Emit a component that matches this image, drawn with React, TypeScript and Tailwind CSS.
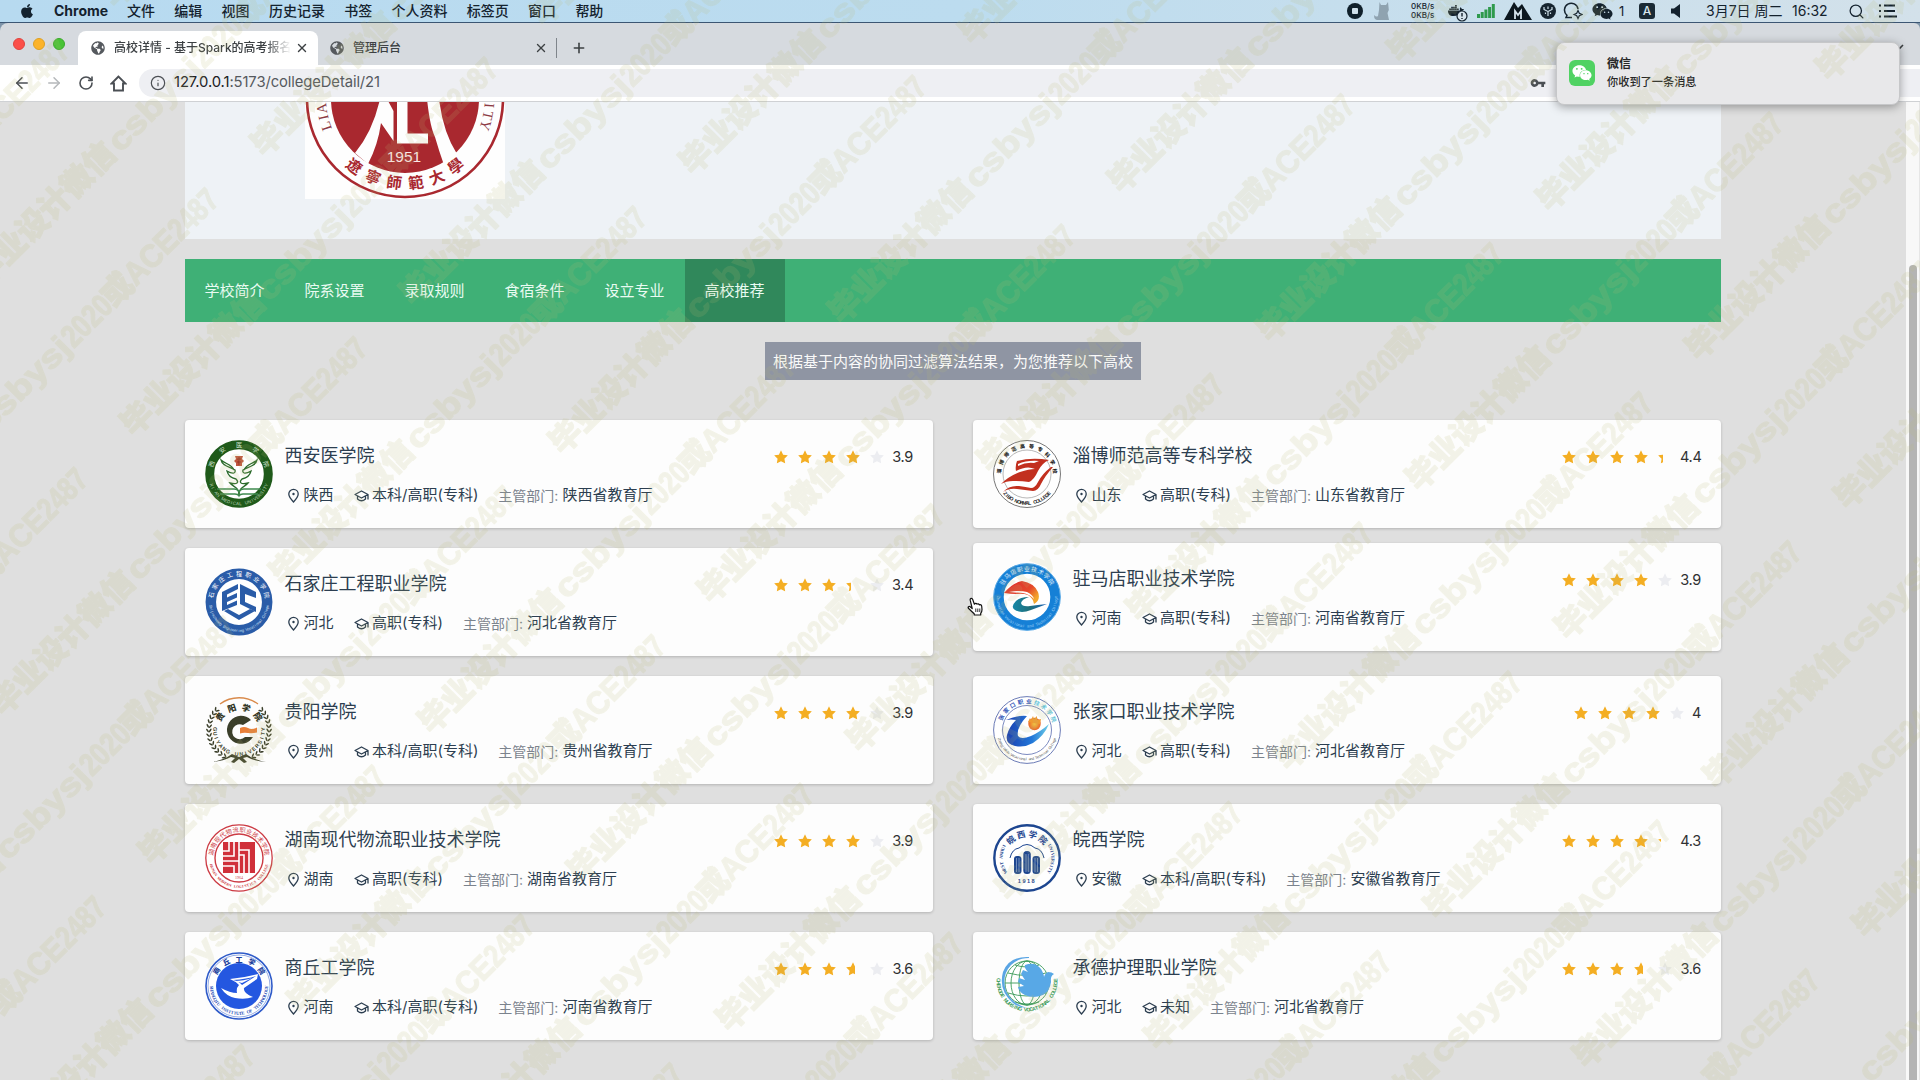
import React from "react";
import { FaApple, FaDocker, FaWeixin, FaGlobeAmericas } from "react-icons/fa";
import { MdVpnKey } from "react-icons/md";
import { ArrowLeft, ArrowRight, Plus, X, Search, Info, RotateCw } from "lucide-react";

/* ---------- shared drawing helpers ---------- */

type ArcProps = {
  text: string;
  r: number;
  from: number;
  to: number;
  size: number;
  fill: string;
  cx?: number;
  cy?: number;
  inward?: boolean;
  weight?: number;
  serif?: boolean;
};

/* Characters spread on a circle; angles in degrees clockwise from 12 o'clock. */
function ArcText({ text, r, from, to, size, fill, cx = 34, cy = 34, inward, weight = 700, serif }: ArcProps) {
  const chars = Array.from(text);
  const step = chars.length > 1 ? (to - from) / (chars.length - 1) : 0;
  return (
    <g
      fill={fill}
      fontSize={size}
      fontWeight={weight}
      textAnchor="middle"
      fontFamily={serif ? "'Liberation Serif','Noto Sans CJK SC',serif" : "'Liberation Sans','Noto Sans CJK SC',sans-serif"}
    >
      {chars.map((c, i) => {
        const a = from + step * i;
        const rad = (a * Math.PI) / 180;
        const x = cx + r * Math.sin(rad);
        const y = cy - r * Math.cos(rad);
        return (
          <text key={i} transform={`translate(${x} ${y}) rotate(${inward ? a - 180 : a})`} y={size * 0.36}>
            {c}
          </text>
        );
      })}
    </g>
  );
}

const seal = "block h-[68px] w-[68px] shrink-0";

function LogoXian() {
  return (
    <svg className={seal} viewBox="0 0 68 68">
      <circle cx="34" cy="34" r="29.3" fill="#fff" stroke="#1f5a1a" strokeWidth="9" />
      <ArcText text="西安医学院" r={29} from={-70} to={70} size={6.2} fill="#cfe2cc" weight={400} />
      <ArcText text="XI'AN MEDICAL UNIVERSITY" r={29.5} from={-112} to={-248} size={4.5} fill="#b9d3b6" inward weight={400} />
      <path d="M30 16h8l-1 3 2 2-2 2v3h-6v-3l-2-2 2-2z" fill="#c0563e" />
      <path d="M34 17v8M32 19h4M32 22h4" stroke="#8f2f20" strokeWidth=".8" />
      <g fill="none" stroke="#2b6a2b" strokeWidth="1.3">
        <path d="M34 55c0-8-6-8-9-12 8 2 9-1 6-4-5-1-8-4-9-8 5 3 9 3 8-1-5-3-13-4-14-10 4 4 11 4 13 10" />
        <path d="M34 55c0-8 6-8 9-12-8 2-9-1-6-4 5-1 8-4 9-8-5 3-9 3-8-1 5-3 13-4 14-10-4 4-11 4-13 10" />
      </g>
      <path d="M12 49h17q4 0 5 3 1-3 5-3h17M15 54h15q3 0 4 2 1-2 4-2h15" fill="none" stroke="#3f8a4f" strokeWidth="1.3" />
    </svg>
  );
}

function LogoShijiazhuang() {
  return (
    <svg className={seal} viewBox="0 0 68 68">
      <circle cx="34" cy="34" r="28.2" fill="#fff" stroke="#2a5ca8" strokeWidth="10.5" />
      <ArcText text="石家庄工程职业学院" r={28.5} from={-76} to={76} size={6} fill="#fff" weight={400} />
      <ArcText text="Shijiazhuang Engineering Vocational College" r={28.5} from={-98} to={-262} size={3.8} fill="#d6e2f5" inward weight={400} />
      <g fill="#2a5ca8">
        <path d="M17 24l16-8v5l-11 5.500v3l10-4.500v4.500l-10 4.500v3l10-4.500v4.500l-15 6z" />
        <path d="M35 16l16 8v6l-11-4v8l11 5v5l-16-8z" />
        <path d="M19 43l4-2 11 6 11-6 5 2-16 9z" />
      </g>
    </svg>
  );
}

function LogoGuiyang() {
  const leaves = Array.from({ length: 13 }, (_, i) => 48 + i * 8.6);
  return (
    <svg className={seal} viewBox="0 0 68 68">
      <path d="M15 8A32 32 0 0 1 53 8" fill="none" stroke="#d98b4c" strokeWidth="1.4" />
      {leaves.map((a) => (
        <g key={a} fill="#3b3f2a">
          <ellipse cx="34" cy="2.500" rx="2.200" ry=".8" transform={`rotate(${a} 34 34) rotate(35 34 2.500)`} />
          <ellipse cx="34" cy="5.200" rx="2.200" ry=".8" transform={`rotate(${a} 34 34) rotate(-35 34 5.200)`} />
          <ellipse cx="34" cy="2.500" rx="2.200" ry=".8" transform={`rotate(${-a} 34 34) rotate(-35 34 2.500)`} />
          <ellipse cx="34" cy="5.200" rx="2.200" ry=".8" transform={`rotate(${-a} 34 34) rotate(35 34 5.200)`} />
        </g>
      ))}
      <path d="M7 66q12-2 20-8l7 3 7-3q8 6 20 8-12-1-19-5l-4 1 4 4-3 1-5-4-5 4-3-1 4-4-4-1q-7 4-19 5z" fill="#3b3f2a" />
      <ArcText text="贵阳学院" r={23} from={-55} to={55} size={8.5} fill="#2f3322" weight={900} />
      <ArcText text="GUIYANG UNIVERSITY" r={24} from={-88} to={-272} size={5.4} fill="#3b3f2a" inward />
      <path d="M46 24a14 14 0 1 0 2 17h-8a7.500 7.500 0 1 1-2-12z" fill="#3b3f2a" />
      <path d="M35 32q4-2 8 0t9-.5v5q-4 1-9 .5t-8 .5z" fill="#e9803a" />
    </svg>
  );
}

function LogoHunan() {
  return (
    <svg className={seal} viewBox="0 0 68 68">
      <circle cx="34" cy="34" r="33.200" fill="#fff" stroke="#cc3b44" strokeWidth="1.300" />
      <circle cx="34" cy="34" r="24" fill="none" stroke="#cc3b44" strokeWidth="1.400" />
      <ArcText text="湖南现代物流职业技术学院" r={28.200} from={-78} to={78} size={6.200} fill="#cc3b44" weight={400} />
      <ArcText text="HUNAN MODERN LOGISTICS COLLEGE" r={28.500} from={-105} to={-255} size={3.800} fill="#cc3b44" inward serif />
      <path d="M18 18h32v31H18z" fill="#d0303a" />
      <path d="M24 18v9h-6M18 32h11V18M34 18v8h10v23M34 31h5v18M34 18v19H18M34 37v12M29 49v-7H18" fill="none" stroke="#fff" strokeWidth="1.600" />
      <text x="34" y="55" fontSize="4" fontFamily="'Liberation Serif',serif" fill="#cc3b44" textAnchor="middle">1964</text>
    </svg>
  );
}

function LogoShangqiu() {
  return (
    <svg className={seal} viewBox="0 0 68 68">
      <circle cx="34" cy="34" r="33" fill="#fff" stroke="#2f5bc9" strokeWidth="1.600" />
      <circle cx="34" cy="34" r="31" fill="none" stroke="#2f5bc9" strokeWidth=".5" />
      <circle cx="34" cy="34" r="23" fill="#2457e0" />
      <ArcText text="商丘工学院" r={27} from={-56} to={56} size={7} fill="#1d3f9d" weight={900} />
      <ArcText text="SHANGQIU INSTITUTE OF TECHNOLOGY" r={27.300} from={-92} to={-268} size={4.600} fill="#2a50b8" inward serif />
      <path d="M25 27q14-1 28-5l-1 5-13 9q-1 5 9 9-8 3-18 1-9-2-14-10 9 5 16 5-1-5 2-8-4-4-9-6z" fill="#fff" />
      <path d="M28 28q14-1 23-4l-14 9q-3-4-9-5z" fill="#2457e0" />
      <path d="M29 29q10 0 18-3l-10 5z" fill="#fff" />
    </svg>
  );
}

function LogoZibo() {
  return (
    <svg className={seal} viewBox="0 0 68 68">
      <circle cx="34" cy="34" r="33.500" fill="#fff" stroke="#555" strokeWidth=".8" />
      <circle cx="34" cy="34" r="24" fill="none" stroke="#888" strokeWidth=".6" />
      <ArcText text="淄博师范高等专科学校" r={28} from={-84} to={84} size={5} fill="#222" weight={900} />
      <ArcText text="ZIBO NORMAL COLLEGE" r={29} from={-132} to={-228} size={5} fill="#222" inward />
      <path d="M24 21q15-4 32-1-7 3-11 11-4 9-9 11-8-1-16-1-7 0-12 3 8-8 19-12 9-3 15-3-8-4-19 2-1-5 1-10z" fill="#c2301f" />
      <path d="M25 24q9-4 21-3l-5 2q-8-1-16 3z" fill="#fff" />
      <path d="M60 27q-8 9-12 17-3 7-8 7-8-1-16-2-8-1-14 3 6-7 16-6 7 1 12 2 4 0 7-6 4-8 13-15z" fill="#c2301f" />
    </svg>
  );
}

function LogoZhumadian() {
  return (
    <svg className={seal} viewBox="0 0 68 68">
      <defs>
        <linearGradient id="zmRed" x1="0" y1="0" x2="1" y2=".6">
          <stop offset="0" stopColor="#dc2c2c" />
          <stop offset=".7" stopColor="#e5482b" />
          <stop offset="1" stopColor="#f3a62c" />
        </linearGradient>
        <linearGradient id="zmBlue" x1="0" y1="0" x2="1" y2="0">
          <stop offset="0" stopColor="#1688a8" />
          <stop offset=".5" stopColor="#1f6f7a" />
          <stop offset="1" stopColor="#1b62b8" />
        </linearGradient>
      </defs>
      <circle cx="34" cy="34" r="28.300" fill="#fff" stroke="#1680d6" strokeWidth="10" />
      <circle cx="34" cy="34" r="33.400" fill="none" stroke="#5aa9e6" strokeWidth="1" />
      <ArcText text="驻马店职业技术学院" r={28.500} from={-58} to={58} size={5.800} fill="#e8f4fd" weight={400} />
      <ArcText text="Zhumadian Vocational and Technical College" r={29} from={-90} to={-270} size={4} fill="#9fd0f7" inward weight={400} />
      <path d="M11 30q8-10 18-12 12 2 16 11 3 8-4 12-1-6-6-9-5-2-12-1-6 0-12-1z" fill="url(#zmRed)" />
      <path d="M16 29q10-2 18 0 6 3 7 7-5-5-11-6z" fill="#fff" />
      <path d="M36 34q-9 0-13 4-6 6-1 9 6 4 16 0 8-3 16-6-10 1-17 2-8 1-9-3 1-4 8-6z" fill="url(#zmBlue)" />
    </svg>
  );
}

function LogoZhangjiakou() {
  return (
    <svg className={seal} viewBox="0 0 68 68">
      <defs>
        <linearGradient id="zjBlue" x1="0" y1="0" x2="1" y2="0">
          <stop offset="0" stopColor="#1b3fb0" />
          <stop offset=".6" stopColor="#2277d8" />
          <stop offset="1" stopColor="#6fd0e8" />
        </linearGradient>
        <radialGradient id="zjSun">
          <stop offset="0" stopColor="#f8c63c" />
          <stop offset="1" stopColor="#e8642a" />
        </radialGradient>
      </defs>
      <circle cx="34" cy="34" r="33.400" fill="#fff" stroke="#5a6cae" strokeWidth=".9" />
      <circle cx="34" cy="34" r="24.500" fill="none" stroke="#5a6cae" strokeWidth=".8" />
      <ArcText text="张家口职业" r={28.500} from={-64} to={4} size={5.600} fill="#2f55b8" />
      <ArcText text="技术学院" r={28.500} from={20} to={68} size={5.600} fill="#62c3d8" />
      <ArcText text="Zhangjiakou Vocational and Technical College" r={29} from={-108} to={-252} size={3.700} fill="#555" inward weight={400} />
      <path d="M13 24q11-5 21-4-11 12-9 20 3 4 13 0 9-4 18-12-5 12-16 19-9 5-18 3-10-2-8-11 2-8 9-15-5-1-10 0z" fill="url(#zjBlue)" />
      <circle cx="41.500" cy="28" r="6.200" fill="url(#zjSun)" />
      <path d="M35 26l2-4 1 2 2-4 1 3 3-3v4l4-1-1 5z" fill="#f09a30" />
    </svg>
  );
}

function LogoWanxi() {
  return (
    <svg className={seal} viewBox="0 0 68 68">
      <circle cx="34" cy="34" r="32.700" fill="#fff" stroke="#1d4690" strokeWidth="2.400" />
      <ArcText text="皖西学院" r={24} from={-42} to={42} size={8.500} fill="#1d4690" weight={700} />
      <ArcText text="WEST ANHUI" r={26} from={-122} to={-62} size={4.600} fill="#1d4690" serif />
      <ArcText text="UNIVERSITY" r={26} from={62} to={122} size={4.600} fill="#1d4690" serif />
      <path d="M17 34q2-9 9-10 8-7 16 0 7 1 9 10" fill="none" stroke="#1d4690" strokeWidth="1" />
      <rect x="21" y="32" width="7.500" height="18" rx="3" fill="#1d4690" />
      <rect x="30.300" y="27" width="7.500" height="23" rx="3.500" fill="#1d4690" />
      <rect x="39.500" y="32" width="7.500" height="18" rx="3" fill="#1d4690" />
      <path d="M23.500 34v14M26 34v14M33 30v18M35.300 30v18M42 34v14M44.500 34v14" stroke="#a9bedf" strokeWidth=".6" />
      <text x="34" y="59" fontSize="5.600" letterSpacing="1.500" fontWeight="700" fontFamily="'Liberation Sans',sans-serif" fill="#1d4690" textAnchor="middle">1918</text>
    </svg>
  );
}

function LogoChengde() {
  return (
    <svg className={seal} viewBox="0 0 68 68">
      <g fill="none" stroke="#3a9a58" strokeWidth=".9">
        <circle cx="34" cy="31" r="22" fill="#fff" />
        <ellipse cx="34" cy="31" rx="8" ry="22" />
        <ellipse cx="34" cy="31" rx="16" ry="22" />
        <path d="M12 31h44M15 21q19 5 38 0M15 41q19 6 38 0M22 13q12 4 24 0M22 50q12 4 24 0" />
      </g>
      <path d="M36 5Q16 4 10 20 5 38 20 51q6 5 14 5Q19 52 13 39 8 24 18 13q7-7 18-7z" fill="#5aa5e4" />
      <path d="M32 13q10-4 16 4 3 5 3 8 1-4 4-5 4 0 6 2-4 2-3 8-1 9-8 13-10 4-18 0-6-3-7-8l6-1-6-4 1-4 6 2-4-6 2-4 5 2q-4-4-3-7z" fill="#58a8e6" />
      <ArcText text="CHENGDE NURSING VOCATIONAL COLLEGE" r={28.500} cy={29} from={-88} to={-272} size={5.200} fill="#3a9a58" inward />
    </svg>
  );
}

function HeroSeal() {
  return (
    <svg className="ml-[120px] block h-[97px] w-[200px]" viewBox="0 103 200 97">
      <rect x="0" y="0" width="200" height="200" fill="#fefefe" />
      <circle cx="100" cy="100" r="98" fill="#fefefe" stroke="#a9282f" strokeWidth="2.600" />
      <circle cx="100" cy="100" r="74" fill="#a9282f" />
      <path d="M75 100Q68 132 50 154L63 165Q73 146 76 124L88.500 142V112L82 100z" fill="#fefefe" />
      <path d="M92 100v44.500h31v-10h-20.500V100z" fill="#fefefe" />
      <path d="M122 100q3 28 8 38 4 14 9 28l13-11q-14-22-18-55z" fill="#fefefe" />
      <text x="99" y="163" fontSize="15.500" fontFamily="'Liberation Sans',sans-serif" fill="#fbe9e9" textAnchor="middle">1951</text>
      <ArcText text="遼寧師範大學" r={84.500} cx={100} cy={100} from={-143} to={-217} size={15.500} fill="#a9282f" inward />
      <ArcText text="LIA" r={84} cx={100} cy={100} from={-109} to={-96.500} size={14.500} fill="#8c3a44" weight={400} serif />
      <ArcText text="ITY" r={85} cx={100} cy={100} from={94.500} to={108} size={14.500} fill="#8c3a44" weight={400} serif />
    </svg>
  );
}

/* ---------- menu bar ---------- */

const menus = ["文件", "编辑", "视图", "历史记录", "书签", "个人资料", "标签页", "窗口", "帮助"];

function MenuBar() {
  return (
    <div className="flex h-[23px] shrink-0 items-center border-b border-[#3c5673] bg-linear-to-r from-[#b7daf0] via-[#bcdcef] to-[#d3e1ea] text-[14px] leading-[22px] text-[#14222e]">
      <FaApple className="ml-[19px] h-[16px] w-[16px]" />
      <span className="ml-[19px] w-[54px] font-bold">Chrome</span>
      <div className="ml-[19px] flex gap-[19.3px] font-medium">
        {menus.map((m) => (
          <span key={m}>{m}</span>
        ))}
      </div>
      <div className="ml-auto flex items-center">
        <svg className="h-4 w-4" viewBox="0 0 16 16">
          <circle cx="8" cy="8" r="8" fill="#10202b" />
          <rect x="5" y="5" width="6" height="6" rx="1" fill="#cfe0ea" />
        </svg>
        <svg className="ml-[11px] h-[18px] w-4" viewBox="0 0 16 18">
          <path d="M5.500 0l1.500 3h5l2-3 .8 8-1.300 3L15 18H3Q-.5 17 .3 13 2 15.500 4 14L5 8z" fill="#8fa3b0" />
        </svg>
        <div className="ml-[21px] w-[27px] text-[8px] leading-[9px] font-medium">
          <div>0KB/s</div>
          <div>0KB/s</div>
        </div>
        <div className="relative ml-[10px] h-[17px] w-[19px]">
          <FaDocker className="h-[15px] w-[16px]" />
          <svg className="absolute -right-[1px] -bottom-[2px] h-[12px] w-[12px]" viewBox="0 0 12 12">
            <circle cx="6" cy="6" r="5" fill="#d5e3ec" stroke="#14222e" strokeWidth="1.200" />
            <path d="M6 3v3.500M6 8v1" stroke="#14222e" strokeWidth="1.400" />
          </svg>
        </div>
        <svg className="ml-[10px] h-[14px] w-[18px]" viewBox="0 0 18 14">
          <path d="M0 10h3v4H0zM3.700 8h3v6h-3zM7.400 5.500h3V14h-3zM11.100 3h3v11h-3zM14.800 0h3v14h-3z" fill="#2f9a4d" />
        </svg>
        <svg className="ml-[9px] h-[18px] w-[28px]" viewBox="0 0 28 18">
          <path d="M0 18L10 0l4 6 4-4 10 16z" fill="#0c161e" />
          <path d="M11 17V9l3 4 3-4v8" fill="none" stroke="#d5e3ec" strokeWidth="1.800" />
        </svg>
        <svg className="ml-2 h-4 w-4" viewBox="0 0 16 16">
          <circle cx="8" cy="8" r="8" fill="#16242f" />
          <path d="M8 13V8.500L4 6.500V4M8 8.500l4-2V4M5.500 11V9.500M10.500 11V9.500M8 6V3.500" fill="none" stroke="#cfe0ea" strokeWidth="1.200" />
        </svg>
        <svg className="ml-[7px] h-[18px] w-[20px]" viewBox="0 0 20 18">
          <path d="M9 15.500H3l1-2.200a6.800 6.800 0 1 1 11-6.300" fill="none" stroke="#16242f" strokeWidth="1.500" />
          <path d="M15 8.500l1.300 2.700 2.700 1.300-2.700 1.300L15 16.500l-1.300-2.700-2.700-1.300 2.700-1.300z" fill="none" stroke="#16242f" strokeWidth="1.200" />
        </svg>
        <FaWeixin className="ml-[9px] h-[19px] w-[21px]" />
        <span className="ml-[6px] w-[8px] text-[13px]">1</span>
        <span className="ml-[12px] flex h-4 w-4 items-center justify-center rounded-[3px] bg-[#1b2a35] text-[12px] leading-none font-medium text-[#d8e5ed]">A</span>
        <svg className="ml-[16px] h-[14px] w-[10px]" viewBox="0 0 10 14">
          <path d="M0 4.500h3L9 0v14L3 9.500H0z" fill="#14222e" />
        </svg>
        <span className="ml-[25px] w-[79px] whitespace-nowrap">3月7日 周二</span>
        <span className="ml-[7px] w-[37px]">16:32</span>
        <Search className="ml-[19px] h-[17px] w-[17px]" strokeWidth={1.800} />
        <svg className="mr-[22px] ml-[14px] h-[14px] w-[19px]" viewBox="0 0 19 14">
          <path d="M0 1.500h2M5 1.500h11M0 7h2M5 7h11M0 12.500h2M5 12.500h13" stroke="#14222e" strokeWidth="1.800" />
        </svg>
      </div>
    </div>
  );
}

/* ---------- browser chrome ---------- */

function TabStrip() {
  return (
    <div className="flex h-[42px] shrink-0 items-start rounded-tl-[8px] rounded-tr-[6px] bg-[#d6dadf] text-[12px] text-[#3c4043]">
      <div className="mt-[15px] ml-[13px] flex gap-2">
        <i className="h-3 w-3 rounded-full border border-[#e0443e] bg-[#fb4f49]" />
        <i className="h-3 w-3 rounded-full border border-[#dea123] bg-[#fcb32a]" />
        <i className="h-3 w-3 rounded-full border border-[#3aaa2b] bg-[#48c336]" />
      </div>
      <div className="mt-2 ml-[13px] flex h-[34px] w-[240px] items-center rounded-t-[8px] bg-white">
        <FaGlobeAmericas className="ml-[13px] h-[14px] w-[14px] shrink-0 text-[#55595e]" />
        <span className="ml-[9px] w-[177px] overflow-hidden mask-r-from-85% font-medium whitespace-nowrap">高校详情 - 基于Spark的高考报名</span>
        <X className="ml-[4px] h-[14px] w-[14px] shrink-0" strokeWidth={2.400} />
      </div>
      <div className="mt-2 flex h-[34px] w-[239px] items-center">
        <FaGlobeAmericas className="ml-[12px] h-[14px] w-[14px] text-[#55595e]" />
        <span className="ml-[9px] font-medium">管理后台</span>
        <X className="mr-[9px] ml-auto h-[14px] w-[14px]" strokeWidth={2.400} />
      </div>
      <i className="mt-[15px] -ml-px h-5 w-px bg-[#7f858b]" />
      <Plus className="mt-[17px] ml-[14px] h-4 w-4" strokeWidth={2.400} />
      <svg className="mt-[19px] mr-[16px] ml-auto h-[10px] w-[10px]" viewBox="0 0 10 10">
        <path d="M1 3l4 4 4-4" fill="none" stroke="#3c4043" strokeWidth="1.600" />
      </svg>
    </div>
  );
}

function Toolbar() {
  return (
    <div className="flex h-[37px] shrink-0 items-center border-b border-[#cfd1d4] bg-white text-[#4b4f54]">
      <ArrowLeft className="ml-[13px] h-[18px] w-[18px]" />
      <ArrowRight className="ml-[14px] h-[18px] w-[18px] text-[#b5b8bb]" />
      <RotateCw className="ml-[15px] h-[16px] w-[16px]" strokeWidth={2.400} />
      <svg className="ml-[16px] h-[17px] w-[17px]" viewBox="0 0 17 17">
        <path d="M8.500 1.500L1.500 8.500H4V15.500H13V8.500H15.500z" fill="none" stroke="#4b4f54" strokeWidth="1.900" />
      </svg>
      <div className="ml-[12px] flex h-[28px] flex-1 items-center rounded-l-full bg-[#eeeff3]">
        <Info className="ml-[11px] h-[16px] w-[16px]" strokeWidth={1.800} />
        <span className="-mt-px ml-[8px] text-[14.8px] tracking-[-0.1px] text-[#55595e]">
          <span className="text-[#202124]">127.0.0.1</span>:5173/collegeDetail/21
        </span>
        <MdVpnKey className="mr-[374px] ml-auto h-4 w-4" />
      </div>
    </div>
  );
}

/* ---------- page ---------- */

const tabs = ["学校简介", "院系设置", "录取规则", "食宿条件", "设立专业", "高校推荐"];

type College = {
  name: string;
  area: string;
  level: string;
  dept: string;
  score: number;
  Logo: () => React.ReactElement;
  lifted?: boolean;
};

const colleges: College[] = [
  { name: "西安医学院", area: "陕西", level: "本科/高职(专科)", dept: "陕西省教育厅", score: 3.9, Logo: LogoXian },
  { name: "淄博师范高等专科学校", area: "山东", level: "高职(专科)", dept: "山东省教育厅", score: 4.4, Logo: LogoZibo },
  { name: "石家庄工程职业学院", area: "河北", level: "高职(专科)", dept: "河北省教育厅", score: 3.4, Logo: LogoShijiazhuang },
  { name: "驻马店职业技术学院", area: "河南", level: "高职(专科)", dept: "河南省教育厅", score: 3.9, Logo: LogoZhumadian, lifted: true },
  { name: "贵阳学院", area: "贵州", level: "本科/高职(专科)", dept: "贵州省教育厅", score: 3.9, Logo: LogoGuiyang },
  { name: "张家口职业技术学院", area: "河北", level: "高职(专科)", dept: "河北省教育厅", score: 4, Logo: LogoZhangjiakou },
  { name: "湖南现代物流职业技术学院", area: "湖南", level: "高职(专科)", dept: "湖南省教育厅", score: 3.9, Logo: LogoHunan },
  { name: "皖西学院", area: "安徽", level: "本科/高职(专科)", dept: "安徽省教育厅", score: 4.3, Logo: LogoWanxi },
  { name: "商丘工学院", area: "河南", level: "本科/高职(专科)", dept: "河南省教育厅", score: 3.6, Logo: LogoShangqiu },
  { name: "承德护理职业学院", area: "河北", level: "未知", dept: "河北省教育厅", score: 3.6, Logo: LogoChengde },
];

const STAR =
  "M283.84 867.84 512 747.776l228.16 119.936a6.4 6.4 0 0 0 9.28-6.72l-43.52-254.08 184.512-179.904a6.4 6.4 0 0 0-3.52-10.88l-255.104-37.12L517.76 147.904a6.4 6.4 0 0 0-11.52 0L392.192 379.072l-255.104 37.12a6.4 6.4 0 0 0-3.52 10.88L318.08 606.976l-43.584 254.08a6.4 6.4 0 0 0 9.28 6.72z";

function Stars({ score }: { score: number }) {
  const whole = Math.floor(score);
  return (
    <div className="flex h-[18px] items-center">
      {[0, 1, 2, 3, 4].map((i) => {
        const part = i < whole ? 1 : i === whole ? score - whole : 0;
        const empty = i > whole || part === 0;
        return (
          <span key={i} className="mr-[6px] block h-[18px] w-[18px]">
            <span className="block h-full overflow-hidden" style={{ width: empty ? "100%" : `${part * 100}%` }}>
              <svg className="h-[18px] w-[18px] max-w-none" viewBox="0 0 1024 1024">
                <path d={STAR} fill={empty ? "#ecedf1" : "#f4ae23"} />
              </svg>
            </span>
          </span>
        );
      })}
      <span className={"mt-px text-right text-[14.5px] tracking-[-0.3px] text-[#303133] " + (score === 4 ? "w-[9px]" : "w-[21px]")}>{score}</span>
    </div>
  );
}

function CollegeCard({ c }: { c: College }) {
  return (
    <div
      className={
        "flex h-[108px] rounded-[4px] bg-[#fdfdfd] p-5 shadow-[0_1px_3px_rgba(0,0,0,0.2)] " +
        (c.lifted ? "-translate-y-[5px]" : "")
      }
    >
      <c.Logo />
      <div className="ml-[11.5px] flex flex-1 flex-col">
        <div className="flex h-[31px] items-center justify-between">
          <span className="text-[18px] text-[#2c3e50]">{c.name}</span>
          <span className="mt-[2px]">
            <Stars score={c.score} />
          </span>
        </div>
        <div className="mt-[14px] flex h-[20px] items-center text-[15px] whitespace-nowrap text-[#2c3e50]">
          <svg className="mt-px ml-px h-[15px] w-[15px]" viewBox="0 0 15 15">
            <path d="M7.500 14C4.500 10.700 2.800 8.300 2.800 6a4.700 4.700 0 0 1 9.400 0c0 2.300-1.700 4.700-4.700 8z" fill="none" stroke="#2c3e50" strokeWidth="1.300" />
            <circle cx="7.500" cy="6" r="1.200" fill="#2c3e50" />
          </svg>
          <span className="ml-[3px] w-[50px]">{c.area}</span>
          <svg className="mt-px ml-[0.5px] h-[14px] w-[15px]" viewBox="0 0 15 14">
            <path d="M1 5.500L7.500 2 14 5.500 7.500 9zM3.500 7v3q4 3.500 8 0V7M14 5.500V10.500" fill="none" stroke="#2c3e50" strokeWidth="1.300" strokeLinejoin="round" />
          </svg>
          <span className="ml-[3px]">{c.level}</span>
          <span className="ml-[20px] text-[14px] text-[#7b838d]">主管部门:</span>
          <span className="ml-[4px]">{c.dept}</span>
        </div>
      </div>
    </div>
  );
}

/* ---------- overlays ---------- */

function Notification() {
  return (
    <div className="absolute top-[42px] left-[1556px] flex h-[63px] w-[344px] items-center rounded-[8px] border border-[#c6c7c9] bg-[#e8e8ea] shadow-[0_2px_10px_rgba(0,0,0,0.35)]">
      <div className="-mt-px ml-[12px] flex h-[26px] w-[26px] items-center justify-center rounded-[6px] bg-[#50d263]">
        <FaWeixin className="h-5 w-5 text-white" />
      </div>
      <div className="-mt-[2px] ml-[12px] text-[#262626]">
        <div className="text-[12px] leading-[18px] font-bold">微信</div>
        <div className="text-[11.2px] leading-[18px] font-medium">你收到了一条消息</div>
      </div>
    </div>
  );
}

function HandCursor() {
  return (
    <svg className="absolute top-[597px] left-[967px] h-[19px] w-[17px]" viewBox="0 0 17 19">
      <path
        d="M5.200 11.500L3.200 3.200C2.800 1.200 5 .6 5.700 2.500L7.400 7.200C8 6 9.600 6.200 9.900 7.200 10.700 6.400 12 6.800 12.300 7.900 13.400 7.300 14.600 8 14.700 9.200L15 12.500Q15 15 13.700 16.200V18H7.200V16.800L4.500 14.200 1.400 11.300C.6 10.200 2 9 3.200 9.700z"
        fill="#fff"
        stroke="#111"
        strokeWidth="1.200"
        strokeLinejoin="round"
      />
      <path d="M8.800 11.500v3.500M10.800 11.500v3.500M12.800 11.500v3.500" stroke="#111" strokeWidth=".9" />
    </svg>
  );
}

const markParts = [
  { t: "毕业设计微信", x: -13, w: 188 },
  { t: "csbysj", x: 178, w: 118 },
  { t: "2020", x: 297, w: 58 },
  { t: "或", x: 354, w: 31 },
  { t: "ACE", x: 385, w: 63 },
  { t: "2487", x: 448, w: 57 },
];

/* Diagonal site-wide watermark; staggered rows in a frame turned by 45 degrees. */
function Watermark() {
  const items: { key: string; t: string; w: number; x: number; y: number }[] = [];
  for (let j = -9; j <= 19; j++) {
    for (let i = -3; i <= 3; i++) {
      for (const p of markParts) {
        const x = i * 580 + (j % 2 ? 290 : 0) + p.x;
        const y = j * 105.3 + 11;
        const mid = x + p.w / 2;
        const px = 266 + (mid + y) * Math.SQRT1_2;
        const py = 141 + (y - mid) * Math.SQRT1_2;
        const reach = p.w * 0.36;
        if (px > -reach && px < 1920 + reach && py > -reach && py < 1080 + reach) {
          items.push({ key: `${i}/${j}/${p.t}`, t: p.t, w: p.w, x, y });
        }
      }
    }
  }
  return (
    <svg className="pointer-events-none absolute inset-0 h-[1080px] w-[1920px] opacity-[0.15]" viewBox="0 0 1920 1080" aria-hidden>
      <g
        transform="translate(266 141) rotate(-45)"
        fill="#bbbb75"
        stroke="#bbbb75"
        strokeWidth="1.300"
        strokeLinejoin="round"
        fontFamily="'Liberation Sans','Noto Sans CJK SC',sans-serif"
        fontWeight="900"
        fontSize="32"
      >
        {items.map((m) => (
          <text key={m.key} x={m.x} y={m.y} textLength={m.w} lengthAdjust="spacingAndGlyphs">
            {m.t}
          </text>
        ))}
      </g>
    </svg>
  );
}

export default function App() {
  return (
    <div className="relative flex h-[1080px] w-[1920px] flex-col overflow-hidden bg-[#7d93a8] font-['Inter','Noto_Sans_CJK_SC',sans-serif]">
      <MenuBar />
      <TabStrip />
      <Toolbar />
      <div className="flex min-h-0 flex-1 bg-[#dfdfdf]">
        <main className="w-[1906px] pl-[185px]">
          <div className="w-[1536px]">
            <section className="h-[137px] bg-[#eef2f6]">
              <HeroSeal />
            </section>
            <nav className="mt-5 flex h-[63px] bg-[#3fb076] text-[15px] text-[#e9fbf2]">
              {tabs.map((t, i) => (
                <a key={t} className={"flex w-[100px] items-center justify-center pt-[2px] pr-px " + (i === 5 ? "bg-[#30885b]" : "")}>
                  {t}
                </a>
              ))}
            </nav>
            <div className="mt-5 flex justify-center">
              <p className="flex h-[38px] items-center bg-[#8f95a3] px-2 pt-[2px] text-[15px] text-[#fafafa]">
                根据基于内容的协同过滤算法结果，为您推荐以下高校
              </p>
            </div>
            <div className="mt-10 grid grid-cols-2 gap-x-10 gap-y-5">
              {colleges.map((c) => (
                <CollegeCard key={c.name} c={c} />
              ))}
            </div>
          </div>
        </main>
        <div className="flex flex-1 justify-center border-r border-[#e6e6e6] bg-[#f8f8f8] pt-[163px]">
          <div className="w-[8px] rounded-t-full bg-[#b4b4b4]" />
        </div>
      </div>
      <Notification />
      <Watermark />
      <HandCursor />
    </div>
  );
}
